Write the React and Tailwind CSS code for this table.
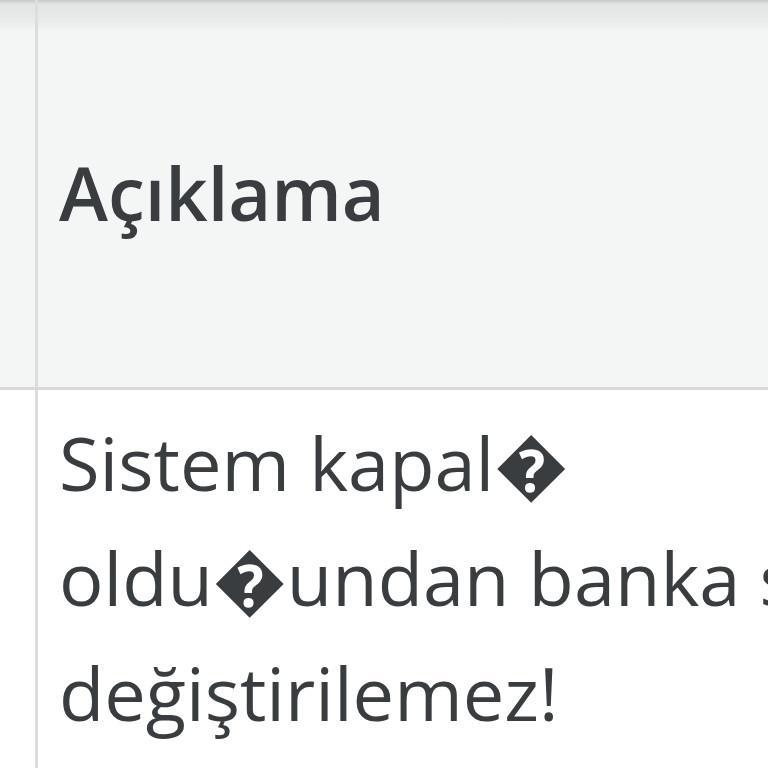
export default function App() {
  return (
    <div
      className="w-[768px] h-[768px] overflow-hidden bg-white text-[#3a3d40]"
      style={{ fontFamily: '"Open Sans", "DejaVu Sans", sans-serif' }}
    >
      <div className="flex h-[390px] bg-[linear-gradient(to_bottom,#c6c7c7_0px,#e3e4e4_4px,#e9eaea_20px,#f4f5f5_32px,#f4f5f5_100%)] border-b-[3px] border-[#d9d9d9]">
        <div className="w-[38px] shrink-0 border-r-[3px] border-[#dcdddd]" />
        <div className="flex items-center pl-[21px] pb-[2px]">
          <span className="text-[74px] font-semibold leading-none whitespace-nowrap">
            Açıklama
          </span>
        </div>
      </div>
      <div className="flex h-[378px]">
        <div className="w-[38px] shrink-0 border-r-[3px] border-[#dcdddd]" />
        <div className="pl-[21px] pt-[15px] text-[74px] leading-[115px] whitespace-nowrap">
          <div>Sistem kapal{"\uFFFD"}</div>
          <div>oldu{"\uFFFD"}undan banka şifresi</div>
          <div>değiştirilemez!</div>
        </div>
      </div>
    </div>
  );
}
